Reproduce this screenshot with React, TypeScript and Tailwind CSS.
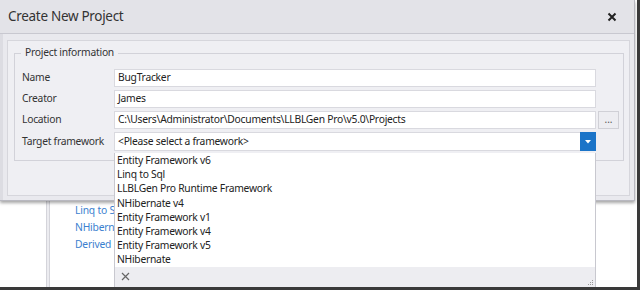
import React from "react";

const font = { fontFamily: '"Noto Sans", "Open Sans", sans-serif' };

const items = [
  "Entity Framework v6",
  "Linq to Sql",
  "LLBLGen Pro Runtime Framework",
  "NHibernate v4",
  "Entity Framework v1",
  "Entity Framework v4",
  "Entity Framework v5",
  "NHibernate",
];

function Field({ label, value, children }: { label: string; value: string; children?: React.ReactNode }) {
  return (
    <div className="flex items-center h-[18px]">
      <div className="w-[99px] pl-[7px] text-[10.3px] tracking-[-0.25px] text-[#333]">{label}</div>
      <div className="w-[482px] h-[18px] bg-white border border-[#d9d9df] flex items-center pl-[3px] text-[10.3px] tracking-[-0.25px] text-[#222]">
        {value}
      </div>
      {children}
    </div>
  );
}

export default function App() {
  return (
    <div className="relative w-[644px] h-[291px] bg-white overflow-hidden" style={font}>
      {/* background window */}
      <div className="absolute left-0 top-0 w-[637px] h-[287px] bg-white flex">
        <div className="w-[46px]" />
        <div className="w-[4px] bg-[#ececf0] border-x border-[#d4d4da]" />
        <div className="flex flex-col pt-[203px] pl-[25px] gap-[3px] text-[10.3px] tracking-[-0.2px] text-[#3b7fcf] leading-[14px] whitespace-nowrap">
          <div>Linq to Sql</div>
          <div>NHibernate</div>
          <div>Derived</div>
        </div>
      </div>
      {/* screenshot frame shadow */}
      <div className="absolute left-[637px] top-0 w-[3px] h-[290px] bg-[#3a3a3a]" />
      <div className="absolute left-0 top-[287px] w-[640px] h-[3px] bg-[#3a3a3a]" />

      {/* dialog */}
      <div className="absolute left-0 top-0 w-[635px] h-[201px] bg-[#e9e9ee] border-r border-b border-[#b8b8c0] shadow-[0_2px_3px_rgba(0,0,0,0.35)] flex flex-col">
        <div className="h-[34px] bg-[#e3e3e8] border-b border-[#c8c8d0] flex items-center justify-between pl-[8px] pr-[17px]">
          <div className="text-[13.5px] tracking-[-0.3px] text-[#333]">Create New Project</div>
          <svg width="10" height="10" viewBox="0 0 10 10">
            <path d="M1.5 1.5 L8.5 8.5 M8.5 1.5 L1.5 8.5" stroke="#222" strokeWidth="2" />
          </svg>
        </div>
        <div className="flex-1 px-[4px] pt-[6px] pb-[4px] border-l-[3px] border-[#dcdce2]">
          <div className="h-full border border-[#d6d6dc] bg-[#efeff3] px-[6px] pt-[12px]">
            <div className="relative border border-[#d2d2d9] w-[610px] h-[108px] pt-[15px] flex flex-col gap-[3px]">
              <div className="absolute -top-[9px] left-[6px] px-[4px] bg-[#efeff3] text-[10.3px] tracking-[-0.25px] text-[#333]">
                Project information
              </div>
              <Field label="Name" value="BugTracker" />
              <Field label="Creator" value="James" />
              <Field label="Location" value="C:\Users\Administrator\Documents\LLBLGen Pro\v5.0\Projects">
                <div className="ml-[2px] w-[21px] h-[18px] border border-[#d0d0d6] bg-[#ededf1] flex items-center justify-center text-[10px] text-[#555] leading-none pb-[3px]">
                  ...
                </div>
              </Field>
              <div className="flex items-center h-[19px]">
                <div className="w-[99px] pl-[7px] text-[10.3px] tracking-[-0.25px] text-[#333]">Target framework</div>
                <div className="w-[482px] h-[19px] bg-white border border-[#d9d9df] flex items-center justify-between pl-[3px] text-[10.3px] tracking-[-0.25px] text-[#222]">
                  <span>&lt;Please select a framework&gt;</span>
                  <div className="w-[16px] h-[19px] bg-[#1b74c8] flex items-center justify-center -mr-px">
                    <svg width="6" height="4" viewBox="0 0 6 4"><path d="M0 0 H6 L3 3.5 Z" fill="#fff" /></svg>
                  </div>
                </div>
              </div>
            </div>
          </div>
        </div>
      </div>

      {/* dropdown */}
      <div className="absolute left-[114px] top-[153px] w-[482px] h-[134px] bg-white border-x border-[#c8c8cf] flex flex-col">
        <div className="flex-1 pl-[2px] text-[10.3px] tracking-[-0.25px] text-[#222] leading-[14.2px]">
          {items.map((t) => (
            <div key={t}>{t}</div>
          ))}
        </div>
        <div className="relative h-[21px] bg-[#ededf1] flex items-center pl-[6px]">
          <svg width="9" height="9" viewBox="0 0 9 9">
            <path d="M1 1 L8 8 M8 1 L1 8" stroke="#666" strokeWidth="1.2" />
          </svg>
          <svg className="absolute right-[1px] bottom-[1px]" width="8" height="8" viewBox="0 0 8 8">
            <rect x="6" y="2" width="1" height="1" fill="#999" />
            <rect x="6" y="4" width="1" height="1" fill="#999" />
            <rect x="6" y="6" width="1" height="1" fill="#999" />
            <rect x="4" y="4" width="1" height="1" fill="#999" />
            <rect x="4" y="6" width="1" height="1" fill="#999" />
            <rect x="2" y="6" width="1" height="1" fill="#999" />
          </svg>
        </div>
      </div>
    </div>
  );
}
